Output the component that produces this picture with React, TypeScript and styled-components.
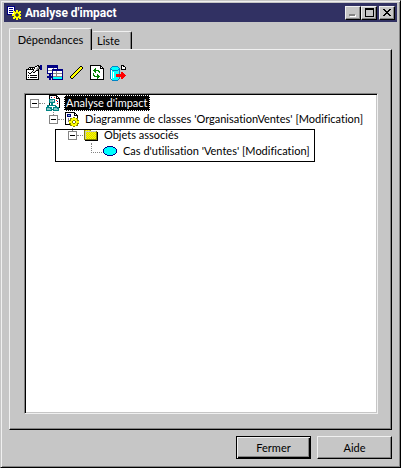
import React, { useState } from "react";
import styled, { createGlobalStyle, css } from "styled-components";

const face = "#c6c6c6";
const light = "#f0f0f0";
const shade = "#848484";
const navy = "#313163";

const GlobalStyle = createGlobalStyle`
  *, *::before, *::after { box-sizing: border-box; }
  body { margin: 0; background: ${face}; }
  button { margin: 0; padding: 0; font: inherit; color: inherit; }
  svg { display: block; shape-rendering: crispEdges; }
`;

const Window = styled.main`
  display: flex;
  flex-direction: column;
  min-height: 100vh;
  padding: 2px 3px 8px 2px;
  background: ${face};
  border: 1px solid;
  border-color: ${face} #000 #000 ${face};
  box-shadow: inset 1px 1px ${light}, inset -1px -1px ${shade};
  font: 11px/16px Lato, "Liberation Sans", Arial, sans-serif;
  font-variant-ligatures: none;
  color: #000;
`;

const TitleBar = styled.header`
  display: flex;
  align-items: center;
  height: 19px;
  margin-left: 1px;
  padding: 0 2px 0 3px;
  background: ${navy};
  color: #fff;
`;

const Title = styled.h1`
  flex: 1;
  margin: 0 0 0 4px;
  font: bold 12px/18px Roboto, "Liberation Sans", Arial, sans-serif;
`;

const raised = css`
  background: ${face};
  border: 1px solid;
  border-color: ${light} #000 #000 ${light};
  box-shadow: inset -1px -1px ${shade};
`;

const CaptionButton = styled.button<{ $spaced?: boolean }>`
  ${raised}
  display: grid;
  place-items: center;
  width: 16px;
  height: 14px;
  margin-left: ${(p) => (p.$spaced ? 2 : 0)}px;
`;

const Tabs = styled.div`
  display: flex;
  align-items: flex-end;
  margin: 6px 6px 0;
  height: 21px;
`;

const Tab = styled.button<{ $active: boolean }>`
  ${raised}
  position: relative;
  z-index: ${(p) => (p.$active ? 1 : 0)};
  height: ${(p) => (p.$active ? 22 : 18)}px;
  width: ${(p) => (p.$active ? 83 : 40)}px;
  border-bottom: 0;
  border-left-color: ${(p) => (p.$active ? light : face)};
  border-radius: 2px 2px 0 0;
  box-shadow: inset -1px 0 ${shade};
  line-height: 18px;
  text-align: ${(p) => (p.$active ? "center" : "left")};
  padding-left: ${(p) => (p.$active ? 0 : 4)}px;
  margin-bottom: ${(p) => (p.$active ? -1 : 0)}px;
`;

const Panel = styled.section`
  ${raised}
  flex: 1;
  display: flex;
  flex-direction: column;
  margin: 0 5px 0 6px;
  padding: 14px 13px 15px 14px;
`;

const Toolbar = styled.div`
  display: flex;
  gap: 5px;
  height: 29px;
  padding-left: 2px;
`;

const ToolButton = styled.button`
  display: grid;
  place-items: center;
  width: 16px;
  height: 17px;
  border: 0;
  background: none;
`;

const Tree = styled.ul`
  position: relative;
  flex: 1;
  min-height: 90px;
  margin: 0;
  padding: 1px 0 0 4px;
  list-style: none;
  background: #fff;
  border: 1px solid;
  border-color: ${shade} ${light} ${light} ${shade};
  box-shadow: inset 1px 1px #000, inset -1px -1px ${face};
`;

const Expander = styled.button`
  position: relative;
  flex: none;
  width: 9px;
  height: 9px;
  margin-left: 1px;
  display: grid;
  place-items: center;
  border: 1px solid ${shade};
  background: #fff;
`;

const Branch = styled.ul`
  margin: 0;
  padding: 0 0 0 19px;
  list-style: none;

  ${Expander}::before {
    content: "";
    position: absolute;
    left: 3px;
    top: -4px;
    height: 3px;
    border-left: 1px dotted ${shade};
  }
`;

const Row = styled.div`
  display: flex;
  align-items: center;
  height: 16px;
  white-space: nowrap;
`;

const Dots = styled.span<{ $leaf?: boolean }>`
  flex: none;
  width: ${(p) => (p.$leaf ? 11 : 6)}px;
  height: ${(p) => (p.$leaf ? 10 : 1)}px;
  margin-left: ${(p) => (p.$leaf ? 5 : 0)}px;
  align-self: ${(p) => (p.$leaf ? "flex-start" : "center")};
  border-bottom: 1px dotted ${shade};
  border-left: ${(p) => (p.$leaf ? `1px dotted ${shade}` : "0")};
`;

const IconSlot = styled.span`
  flex: none;
  width: 16px;
  height: 16px;
  display: grid;
  place-items: center;
`;

const Label = styled.span<{ $selected: boolean }>`
  margin-left: 3px;
  padding: 0 2px;
  cursor: default;
  ${(p) =>
    p.$selected &&
    css`
      background: #000;
      color: #fff;
      outline: 1px dotted #fff;
      outline-offset: -1px;
    `}
`;

const Highlight = styled.div`
  position: absolute;
  top: 35px;
  left: 30px;
  width: 260px;
  height: 33px;
  border: 1px solid #000;
  pointer-events: none;
`;

const Footer = styled.footer`
  display: flex;
  justify-content: flex-end;
  gap: 6px;
  margin: 6px 5px 0 0;
`;

const PushButton = styled.button<{ $primary?: boolean }>`
  ${raised}
  width: 75px;
  height: 23px;
  ${(p) =>
    p.$primary &&
    css`
      border-color: #000;
      box-shadow: inset 1px 1px ${light}, inset -1px -1px #000, inset -2px -2px ${shade};
    `}
`;

const palette: Record<string, string> = {
  k: "#000000",
  w: "#ffffff",
  g: "#848484",
  l: "#c6c6c6",
  n: "#000084",
  c: "#00ffff",
  t: "#008484",
  y: "#ffff00",
  o: "#848400",
  f: "#d6d600",
  r: "#ff0000",
  v: "#008400",
  b: "#0084c6",
  s: "#84c6c6",
};

/* Draws a small bitmap glyph; each letter is a palette colour, a dot is empty. */
function Glyph({ rows }: { rows: string[] }) {
  const width = Math.max(...rows.map((r) => r.length));
  const runs: React.ReactNode[] = [];
  rows.forEach((row, y) => {
    let x = 0;
    while (x < row.length) {
      let end = x + 1;
      while (end < row.length && row[end] === row[x]) end++;
      if (row[x] !== ".")
        runs.push(<rect key={`${x}-${y}`} x={x} y={y} width={end - x} height={1} fill={palette[row[x]]} />);
      x = end;
    }
  });
  return (
    <svg width={width} height={rows.length} viewBox={`0 0 ${width} ${rows.length}`} aria-hidden="true">
      {runs}
    </svg>
  );
}

const appIcon = [
  "nnnnnnnn......",
  "nwwwwwwn......",
  "nwnnnnwn......",
  "nwwwwwwn......",
  "nwnnnnwn.yy...",
  "nwwwwwyy.yy.yy",
  "nwnnnnyyyyyyyy",
  "nwwwwwwyyooyy.",
  "nnnnnyyyo..oyy",
  ".....yyyo..oyy",
  ".......yyooyy.",
  "......yyyyyyyy",
  "......yy.yy.yy",
  ".........yy...",
];

const propertiesIcon = [
  "...........kk.nn",
  ".........kkwkknn",
  "...kkkkkkwwlgknn",
  "..kwkwkwkwlggknn",
  "kkkkkkkkwwlgk.nn",
  "kwwwwwwkwlkkk...",
  "kwwwwwkwlkwwk...",
  "kwkwwkwkkwwwk...",
  "kwwkkwwwwwwwk...",
  "kwwwwwwwwwwwk...",
  "kwkwkkkkkkkwk...",
  "kwwwwwwwwwwwk...",
  "kwkwkkkkkkkwk...",
  "kwwwwwwwwwwwk...",
  "kkkkkkkkkkkkk...",
];

const tableIcon = [
  "nnnnnnnnnnn.....",
  "nnnnnnnnnnn.....",
  "nnnnnnnnnnn.....",
  "nwwwwwgwwwn.....",
  "nwwwwnnnnnnnnnnn",
  "nggggnnnnnnnnnnn",
  "nwwwwnwwwgwwwwwn",
  "nwwwwnwwwgwwwwwn",
  "nnnnnngggggggggn",
  "..nn.nwwwgwwwwwn",
  "..nn.nwwwgwwwwwn",
  "nnnnnngggggggggn",
  "nnnnnncccccccccn",
  "..nn.ncccccccccn",
  "..nn.nnnnnnnnnnn",
];

const rulerIcon = [
  "..........kk.",
  ".........kyyk",
  "........kyyyk",
  ".......kyyyk.",
  "......kyyyk..",
  ".....kyyyk...",
  "....kyyyk....",
  "...kyyyk.....",
  "..kyyyk......",
  ".kyyyk.......",
  "kyyyk........",
  "kyyk.........",
  ".kk..........",
];

const refreshIcon = [
  "kkkkkkkkkkk...",
  "kwwwwwwwwwkk..",
  "kwwwwwwwwwkwk.",
  "kwwwwvwwwwkkkk",
  "kwwwvvwwwwwwwk",
  "kwwvvvvvvwwwwk",
  "kwwwvvwwvvwwwk",
  "kwwwwvwwwvwwwk",
  "kwwvwwwwwwwwwk",
  "kwwvwwwvwwwwwk",
  "kwwvvwwvvwwwwk",
  "kwwwvvvvvvwwwk",
  "kwwwwwwvvwwwwk",
  "kwwwwwwvwwwwwk",
  "kkkkkkkkkkkkkk",
];

const exportIcon = [
  "...........kkk..",
  "..bbbbbb...kwkk.",
  ".bccccccb..kwwwk",
  "bccccccccb.kwwwk",
  "bbccccccbb.kkkkk",
  "bwbbbbbbcb......",
  "bwccccccsb......",
  "bwcwccccsb.rr...",
  "bwcwccccsb.rrr..",
  "bwcwccrrrrrrrrr.",
  "bwcwccrrrrrrrrrr",
  "bwcwccrrrrrrrrr.",
  "bwcwccccsb.rrr..",
  "bwccccccsb.rr...",
  ".bccccccb.......",
  "..bbbbbb........",
];

const impactIcon = [
  "...kkkkkkkk...",
  "...kwwwwwwkk..",
  "...kwnwwrwkwk.",
  "...kwwwwwwkkkk",
  "...ttttttwwwwk",
  "...tssswtwrwwk",
  "...tsssstwwnwk",
  "...ttttttwwwwk",
  "...kwttwwwwrwk",
  "...kwttwwwwwwk",
  ".tttttttttwwwk",
  ".ttwwwwwwttwwk",
  "ttttttwttttttk",
  "tssstt.tssstt.",
  "tsssstttsssst.",
  "tttttt.tttttt.",
];

const diagramIcon = [
  "kkkkkkkkkk....",
  "kwwwwwwwwkk...",
  "kwnnnnwwwkwk..",
  "kwnssnwwwkkkk.",
  "kwnnnnwwwwwwk.",
  "kwwwwwwwoowwk.",
  "kwwgwooyyyyoo.",
  "kwwgwoyyyyyyo.",
  "kwwgooyyooyyoo",
  "kwwgyyyowwoyyy",
  "kwwwyyyowwoyyy",
  "kwwwooyyooyyoo",
  "kkkkkoyyyyyyo.",
  ".....ooyyyyoo.",
  "........oo....",
];

const folderIcon = [
  ".ooooo........",
  "ofyfyfo.......",
  "olllllllllllo.",
  "olyfyfyfyfyfok",
  "olfyfyfyfyfyok",
  "olyfyfyfyfyfok",
  "olfyfyfyfyfyok",
  "olyfyfyfyfyfok",
  "olfyfyfyfyfyok",
  "olyfyfyfyfyfok",
  "oooooooooooook",
  ".kkkkkkkkkkkkk",
];

const useCaseIcon = [
  "....nnnnnn....",
  "..nnccccccnn..",
  ".nccccccccccn.",
  "nccccccccccccn",
  "nccccccccccccn",
  "nccccccccccccn",
  "nccccccccccccn",
  ".nccccccccccn.",
  "..nnccccccnn..",
  "....nnnnnn....",
];

const minimizeGlyph = ["........", "........", "........", "........", "........", "gggggg..", "ggggggw.", ".wwwwww."];
const maximizeGlyph = [
  "kkkkkkkkk",
  "kkkkkkkkk",
  "k.......k",
  "k.......k",
  "k.......k",
  "k.......k",
  "k.......k",
  "k.......k",
  "kkkkkkkkk",
];
const closeGlyph = ["kk....kk", ".kk..kk.", "..kkkk..", "...kk...", "..kkkk..", ".kk..kk.", "kk....kk"];
const minusGlyph = ["kkkkk"];
const plusGlyph = ["..k..", "..k..", "kkkkk", "..k..", "..k.."];

interface TreeNode {
  label: string;
  icon: string[];
  children?: TreeNode[];
}

const root: TreeNode = {
  label: "Analyse d'impact",
  icon: impactIcon,
  children: [
    {
      label: "Diagramme de classes 'OrganisationVentes' [Modification]",
      icon: diagramIcon,
      children: [
        {
          label: "Objets associés",
          icon: folderIcon,
          children: [{ label: "Cas d'utilisation 'Ventes' [Modification]", icon: useCaseIcon }],
        },
      ],
    },
  ],
};

interface NodeProps {
  node: TreeNode;
  selected: string;
  onSelect: (label: string) => void;
}

function Node({ node, selected, onSelect }: NodeProps) {
  const [open, setOpen] = useState(true);
  return (
    <li role="treeitem" aria-expanded={node.children ? open : undefined} aria-selected={selected === node.label}>
      <Row>
        {node.children ? (
          <>
            <Expander aria-label={open ? "Réduire" : "Développer"} onClick={() => setOpen(!open)}>
              <Glyph rows={open ? minusGlyph : plusGlyph} />
            </Expander>
            <Dots />
          </>
        ) : (
          <Dots $leaf />
        )}
        <IconSlot>
          <Glyph rows={node.icon} />
        </IconSlot>
        <Label $selected={selected === node.label} onClick={() => onSelect(node.label)}>
          {node.label}
        </Label>
      </Row>
      {node.children && open && (
        <Branch role="group">
          {node.children.map((child) => (
            <Node key={child.label} node={child} selected={selected} onSelect={onSelect} />
          ))}
        </Branch>
      )}
    </li>
  );
}

const tools = [
  { name: "Propriétés", icon: propertiesIcon },
  { name: "Ajouter une table", icon: tableIcon },
  { name: "Règle", icon: rulerIcon },
  { name: "Actualiser", icon: refreshIcon },
  { name: "Exporter", icon: exportIcon },
];

export default function App() {
  const [selected, setSelected] = useState(root.label);
  return (
    <>
      <GlobalStyle />
      <Window>
        <TitleBar>
          <Glyph rows={appIcon} />
          <Title>Analyse d'impact</Title>
          <CaptionButton aria-label="Minimiser">
            <Glyph rows={minimizeGlyph} />
          </CaptionButton>
          <CaptionButton aria-label="Agrandir">
            <Glyph rows={maximizeGlyph} />
          </CaptionButton>
          <CaptionButton aria-label="Quitter" $spaced>
            <Glyph rows={closeGlyph} />
          </CaptionButton>
        </TitleBar>
        <Tabs role="tablist">
          <Tab role="tab" aria-selected="true" $active>
            Dépendances
          </Tab>
          <Tab role="tab" aria-selected="false" $active={false}>
            Liste
          </Tab>
        </Tabs>
        <Panel role="tabpanel">
          <Toolbar role="toolbar">
            {tools.map((tool) => (
              <ToolButton key={tool.name} aria-label={tool.name}>
                <Glyph rows={tool.icon} />
              </ToolButton>
            ))}
          </Toolbar>
          <Tree role="tree">
            <Node node={root} selected={selected} onSelect={setSelected} />
            <Highlight />
          </Tree>
        </Panel>
        <Footer>
          <PushButton $primary>Fermer</PushButton>
          <PushButton>Aide</PushButton>
        </Footer>
      </Window>
    </>
  );
}
